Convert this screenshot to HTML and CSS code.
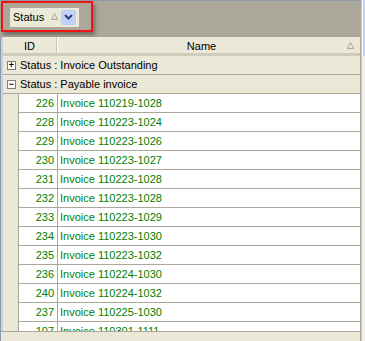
FILE: index.html
```
<!DOCTYPE html>
<html lang="en">
<head>
    <meta charset="UTF-8">
    <title>Invoices grouped by status</title>
    <link rel="stylesheet" href="styles.css">
</head>
<body>
    <div class="frame">
        <div class="main">
            <div class="group-panel">
                <div class="highlight">
                    <div class="group-btn">
                        <span class="group-label">Status</span>
                        <svg class="sort-up" width="7" height="7" viewBox="0 0 7 7"><path d="M3.5 0.5 L6.5 6.5 L0.5 6.5 Z" fill="none" stroke="#aca899"/></svg>
                        <span class="drop-btn">
                            <svg width="9" height="6" viewBox="0 0 9 6"><path d="M1 1 L4.5 4.5 L8 1" fill="none" stroke="#2c3d7a" stroke-width="2"/></svg>
                        </span>
                    </div>
                </div>
            </div>

            <div class="body-area">
                <div class="header">
                    <div class="hcell hcell-id">ID</div>
                    <div class="hcell hcell-name">
                        <span class="hname">Name</span>
                        <svg class="sort-up" width="7" height="7" viewBox="0 0 7 7"><path d="M3.5 0.5 L6.5 6.5 L0.5 6.5 Z" fill="none" stroke="#aca899"/></svg>
                    </div>
                </div>

                <div class="rows">
                    <div class="group-row">
                        <span class="toggle">+</span>
                        <span>Status : Invoice Outstanding</span>
                    </div>
                    <div class="group-row">
                        <span class="toggle">&minus;</span>
                        <span>Status : Payable invoice</span>
                    </div>

                    <div class="row"><div class="indent"></div><div class="cell-id">226</div><div class="cell-name">Invoice 110219-1028</div></div>
                    <div class="row"><div class="indent"></div><div class="cell-id">228</div><div class="cell-name">Invoice 110223-1024</div></div>
                    <div class="row"><div class="indent"></div><div class="cell-id">229</div><div class="cell-name">Invoice 110223-1026</div></div>
                    <div class="row"><div class="indent"></div><div class="cell-id">230</div><div class="cell-name">Invoice 110223-1027</div></div>
                    <div class="row"><div class="indent"></div><div class="cell-id">231</div><div class="cell-name">Invoice 110223-1028</div></div>
                    <div class="row"><div class="indent"></div><div class="cell-id">232</div><div class="cell-name">Invoice 110223-1028</div></div>
                    <div class="row"><div class="indent"></div><div class="cell-id">233</div><div class="cell-name">Invoice 110223-1029</div></div>
                    <div class="row"><div class="indent"></div><div class="cell-id">234</div><div class="cell-name">Invoice 110223-1030</div></div>
                    <div class="row"><div class="indent"></div><div class="cell-id">235</div><div class="cell-name">Invoice 110223-1032</div></div>
                    <div class="row"><div class="indent"></div><div class="cell-id">236</div><div class="cell-name">Invoice 110224-1030</div></div>
                    <div class="row"><div class="indent"></div><div class="cell-id">240</div><div class="cell-name">Invoice 110224-1032</div></div>
                    <div class="row"><div class="indent"></div><div class="cell-id">237</div><div class="cell-name">Invoice 110225-1030</div></div>
                    <div class="row"><div class="indent"></div><div class="cell-id">107</div><div class="cell-name">Invoice 110301-1111</div></div>
                </div>

                <div class="footer"></div>
            </div>
        </div>
        <div class="vscroll">
            <div class="vscroll-top"></div>
        </div>
    </div>
</body>
</html>
```

FILE: styles.css
```
body {
    margin: 0;
    padding: 0;
    font-family: "Liberation Sans", Arial, sans-serif;
    font-size: 11px;
    color: #000;
    background: #f4f3ee;
}

.frame {
    display: flex;
    width: 365px;
    height: 341px;
    overflow: hidden;
}

.main {
    width: 361px;
    display: flex;
    flex-direction: column;
}

.vscroll {
    flex: 1;
    background: #f0efe9;
    border-left: 1px solid #d4d0c8;
}

.vscroll-top {
    height: 56px;
    background: #c6d5f7;
    border-left: 1px solid #ffffff;
}

/* group by panel */
.group-panel {
    height: 36px;
    background: #aca899;
    border-top: 1px solid #8c9aa8;
    padding: 0 0 0 1px;
    flex-shrink: 0;
}

.highlight {
    width: 81px;
    height: 27px;
    margin-top: 0;
    border: 2px solid #f01414;
    box-shadow: 2px 3px 4px rgba(0, 0, 0, 0.35);
    display: flex;
    align-items: center;
    padding-left: 7px;
}

.group-btn {
    width: 69px;
    height: 19px;
    background: #ebe9da;
    display: flex;
    align-items: center;
    margin-top: 1px;
}

.group-label {
    padding-left: 3px;
    width: 38px;
}

.group-btn .sort-up {
    margin-top: -1px;
}

.drop-btn {
    margin-left: 3px;
    width: 15px;
    height: 15px;
    background: #c1d3fb;
    border: 1px solid #b8cdf5;
    border-radius: 2px;
    display: flex;
    align-items: center;
    justify-content: center;
    box-sizing: border-box;
}

/* grid body */
.body-area {
    flex: 1;
    display: flex;
    flex-direction: column;
    border-left: 1px solid #8c9aab;
    padding-left: 0;
    box-shadow: inset 2px 0 0 #c4d0e2;
    overflow: hidden;
    border-right: 1px solid #aca899;
}

.header {
    height: 15px;
    display: flex;
    background: #ebe8d7;
    border-bottom: 3px solid #d0ccbb;
    margin-left: 2px;
    flex-shrink: 0;
    padding-top: 1px;
}

.hcell {
    display: flex;
    align-items: center;
    justify-content: center;
    height: 15px;
}

.hcell-id {
    width: 53px;
    border-right: 1px solid #c7c5b2;
    box-shadow: 1px 0 0 #fff;
}

.hcell-name {
    flex: 1;
    position: relative;
    padding-right: 14px;
}

.hcell-name .sort-up {
    position: absolute;
    right: 6px;
    top: 4px;
}

.rows {
    flex: 1;
    overflow: hidden;
    margin-left: 2px;
}

.group-row {
    height: 18px;
    background: #ebe8d7;
    border-bottom: 1px solid #aca899;
    display: flex;
    align-items: center;
    gap: 4px;
    padding-left: 4px;
}

.toggle {
    width: 7px;
    height: 7px;
    border: 1px solid #7f7f7f;
    background: #fff;
    font-size: 9px;
    line-height: 7px;
    text-align: center;
    font-weight: bold;
    color: #000;
}

.row {
    height: 18px;
    display: flex;
    border-bottom: 1px solid #aca899;
    color: #008000;
}

.indent {
    width: 15px;
    background: #ebe8d7;
    border-right: 1px solid #aca899;
    margin-bottom: -1px;
}

.cell-id {
    width: 35px;
    padding-right: 3px;
    text-align: right;
    line-height: 19px;
    background: #fff;
    border-right: 1px solid #aca899;
}

.cell-name {
    flex: 1;
    padding-left: 2px;
    line-height: 19px;
    background: #fff;
}

.footer {
    height: 9px;
    background: #ebe8d7;
    border-top: 1px solid #aca899;
    flex-shrink: 0;
}
```
